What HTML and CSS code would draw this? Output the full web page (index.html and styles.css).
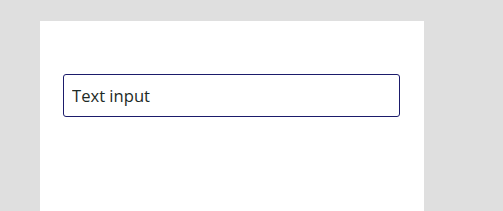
FILE: index.html
```html
<!DOCTYPE html>
<html lang="en">
<head>
    <meta charset="UTF-8">
    <meta name="viewport" content="width=device-width, initial-scale=1.0">
    <title>Text input</title>
    <link rel="stylesheet" href="styles.css">
</head>
<body>
    <main class="screen">
        <input class="text-input" type="text" value="Text input">
    </main>
</body>
</html>
```

FILE: styles.css
```css
html, body {
    height: 100%;
}
body {
    margin: 0;
    background-color: #dfdfdf;
    font-family: "Open Sans", "Noto Sans", sans-serif;
    overflow: hidden;
}
.screen {
    box-sizing: border-box;
    margin: 21px 0 0 40px;
    width: 384px;
    height: calc(100% - 21px);
    padding: 53px 0 0 23px;
    background-color: #ffffff;
}
.text-input {
    box-sizing: border-box;
    display: block;
    width: 337px;
    height: 43px;
    padding: 0 7px 0 8px;
    border: 1px solid #1b1b6b;
    border-radius: 3px;
    background-color: #ffffff;
    color: #1d2a26;
    font-family: "Open Sans", "Noto Sans", sans-serif;
    font-size: 16.6px;
    outline: none;
}
```
